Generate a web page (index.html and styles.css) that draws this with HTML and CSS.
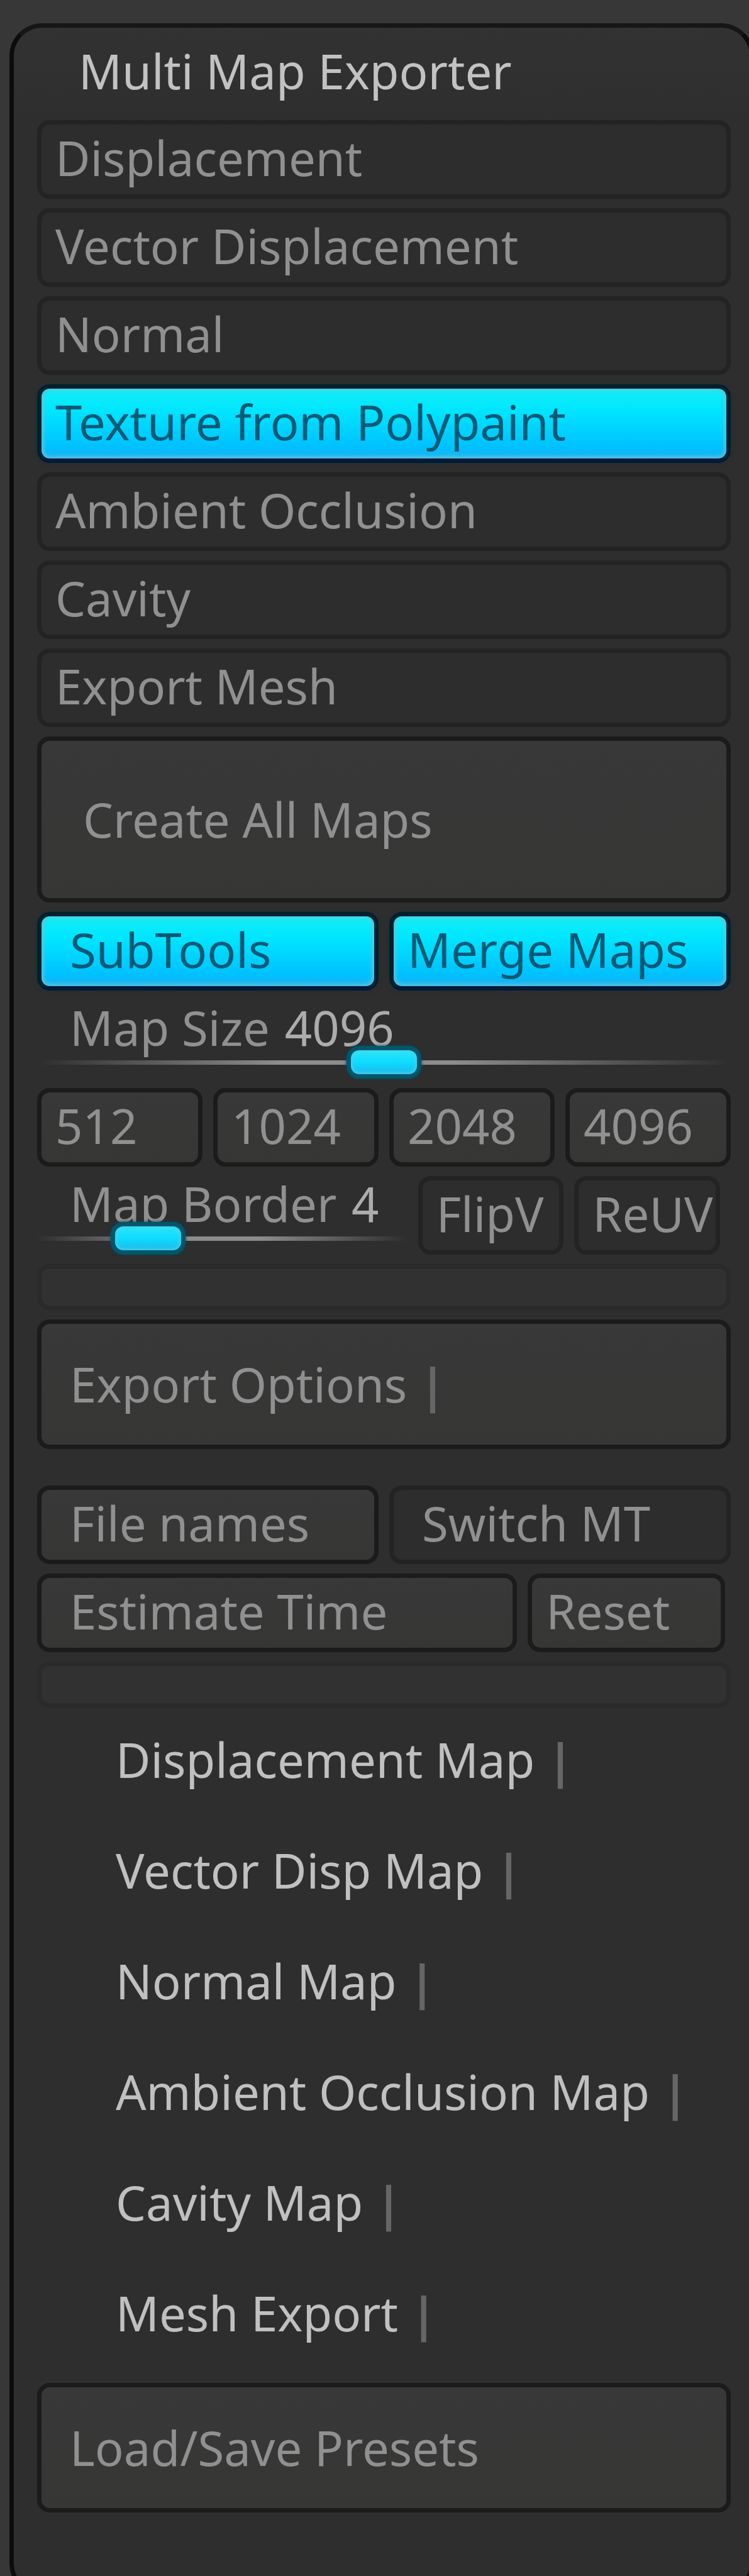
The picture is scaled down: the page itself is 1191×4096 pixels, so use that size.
FILE: index.html
```html
<!DOCTYPE html>
<html lang="en">
<head>
<meta charset="utf-8">
<meta name="viewport" content="width=device-width, initial-scale=1">
<title>Multi Map Exporter</title>
<link rel="stylesheet" href="styles.css">
</head>
<body>
<main class="panel">
  <h1 class="title">Multi Map Exporter</h1>

  <div class="stack">
    <button type="button" class="btn" aria-pressed="false">Displacement</button>
    <button type="button" class="btn" aria-pressed="false">Vector Displacement</button>
    <button type="button" class="btn" aria-pressed="false">Normal</button>
    <button type="button" class="btn active" aria-pressed="true">Texture from Polypaint</button>
    <button type="button" class="btn" aria-pressed="false">Ambient Occlusion</button>
    <button type="button" class="btn" aria-pressed="false">Cavity</button>
    <button type="button" class="btn" aria-pressed="false">Export Mesh</button>
    <button type="button" class="btn raised create">Create All Maps</button>

    <div class="row halves">
      <button type="button" class="btn active indent" aria-pressed="true">SubTools</button>
      <button type="button" class="btn active" aria-pressed="true">Merge Maps</button>
    </div>

    <div class="slider">
      <label for="map-size">Map Size <output for="map-size">4096</output></label>
      <input type="range" id="map-size" min="0" max="8192" value="4096">
    </div>

    <div class="row quarters">
      <button type="button" class="btn raised">512</button>
      <button type="button" class="btn raised">1024</button>
      <button type="button" class="btn raised">2048</button>
      <button type="button" class="btn raised">4096</button>
    </div>

    <div class="row border-row">
      <div class="slider">
        <label for="map-border">Map Border <output for="map-border">4</output></label>
        <input type="range" id="map-border" min="0" max="16" value="4">
      </div>
      <button type="button" class="btn" aria-pressed="false">FlipV</button>
      <button type="button" class="btn" aria-pressed="false">ReUV</button>
    </div>

    <div class="divider"></div>
    <button type="button" class="btn raised tall indent" aria-expanded="false">Export Options <span class="bar">|</span></button>
  </div>

  <div class="stack files">
    <div class="row halves">
      <button type="button" class="btn raised indent">File names</button>
      <button type="button" class="btn indent" aria-pressed="false">Switch MT</button>
    </div>
    <div class="row estimate-row">
      <button type="button" class="btn raised indent">Estimate Time</button>
      <button type="button" class="btn raised">Reset</button>
    </div>
    <div class="divider"></div>
  </div>

  <nav class="sections">
    <button type="button" class="section" aria-expanded="false">Displacement Map <span class="bar">|</span></button>
    <button type="button" class="section" aria-expanded="false">Vector Disp Map <span class="bar">|</span></button>
    <button type="button" class="section" aria-expanded="false">Normal Map <span class="bar">|</span></button>
    <button type="button" class="section" aria-expanded="false">Ambient Occlusion Map <span class="bar">|</span></button>
    <button type="button" class="section" aria-expanded="false">Cavity Map <span class="bar">|</span></button>
    <button type="button" class="section" aria-expanded="false">Mesh Export <span class="bar">|</span></button>
  </nav>

  <div class="stack">
    <button type="button" class="btn raised tall indent">Load/Save Presets</button>
  </div>
</main>
</body>
</html>
```
FILE: styles.css
```css
* {
  box-sizing: border-box;
}

html {
  background: #373737;
}

body {
  display: flex;
  flex-direction: column;
  min-height: 100vh;
  margin: 0;
  overflow: hidden;
  background: #373737;
  color: #909090;
  font: 76px/104px "Noto Sans", "Open Sans", sans-serif;
}

button {
  margin: 0;
  font: inherit;
  color: inherit;
  text-align: left;
  white-space: nowrap;
  cursor: pointer;
}

/* The panel runs past the right and bottom edges of the window. */
.panel {
  flex: 1;
  margin: 37px -8px -32px 15px;
  padding: 0 30px 80px 37px;
  border: 7px solid #0c0c0c;
  border-top-color: #161616;
  border-radius: 52px;
  background: linear-gradient(#323232, #2e2e2e 160px);
}

.title {
  margin: 0;
  padding: 17px 0 26px 66px;
  font-size: 76px;
  font-weight: 400;
  color: #c2c2c2;
}

.stack {
  display: grid;
  gap: 15px;
}

.files {
  margin-top: 58px;
}

.row {
  display: grid;
  gap: 17px;
}

.halves {
  grid-template-columns: 1fr 1fr;
}

.quarters {
  grid-template-columns: repeat(4, 1fr);
}

.border-row {
  grid-template-columns: 587fr 231fr 231fr;
  padding-right: 17px;
}

.estimate-row {
  grid-template-columns: 764fr 314fr;
  padding-right: 9px;
}

.btn {
  min-width: 0;
  height: 125px;
  padding: 0 0 6px 22px;
  border: 7px solid #232323;
  border-radius: 20px;
  background: #2d2d2d;
}

.indent {
  padding-left: 45px;
}

.raised {
  border-color: #1b1b1b;
  background: linear-gradient(#383838, #363635);
}

.active {
  border-color: #00202b;
  border-bottom-color: #001a38;
  background: linear-gradient(#14eef5, #00e6ff 30%, #00c0ff 85%, #22aeea);
  box-shadow: inset 0 0 6px 3px #58c8e0, 0 0 6px #1c3038;
  color: #045a76;
}

.create {
  height: 264px;
  padding: 0 0 0 66px;
}

.tall {
  height: 206px;
  padding-bottom: 0;
}

.divider {
  height: 73px;
  border: 7px solid #2a2a2a;
  border-radius: 20px;
  background: #313131;
}

.bar {
  font-weight: 700;
  color: #666;
}

.slider {
  display: flex;
  flex-direction: column;
  min-width: 0;
}

.slider label {
  padding-left: 52px;
  line-height: 88px;
  white-space: nowrap;
}

.slider output {
  margin-left: 4px;
  color: #acacac;
}

.slider input {
  position: relative;
  width: 100%;
  height: 52px;
  margin: -15px 0 0;
  appearance: none;
  background: linear-gradient(90deg, #2e2e2e, #8c8c8c 35%, #8c8c8c 60%, #2e2e2e) center / 100% 7px no-repeat;
}

.slider input::-webkit-slider-thumb {
  width: 119px;
  height: 52px;
  border: 7px solid #00566b;
  border-radius: 20px;
  appearance: none;
  background: linear-gradient(#30e4f4, #0cdcff 50%, #20b8ea);
  box-shadow: inset 0 0 5px 2px #48d4ec, 0 0 5px #0c4452;
}

.sections {
  display: grid;
  gap: 72px;
  padding: 31px 0 59px 125px;
}

.section {
  padding: 0;
  border: 0;
  background: none;
  color: #c0c0c0;
}
```
